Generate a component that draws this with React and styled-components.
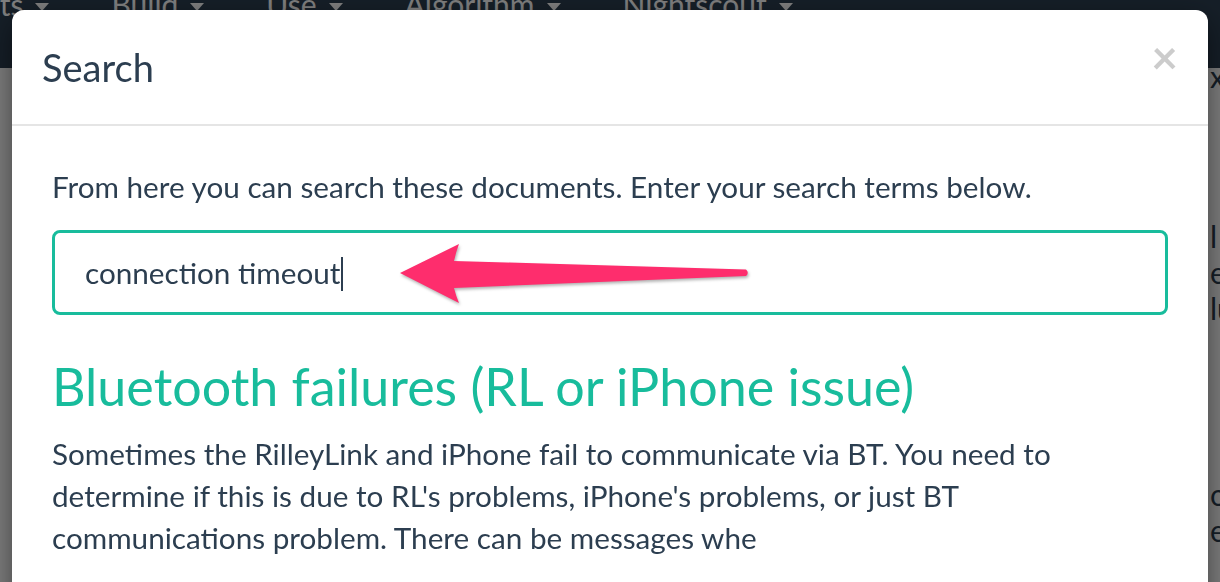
import React from "react";
import styled, { createGlobalStyle } from "styled-components";

const GlobalStyle = createGlobalStyle`
  html, body {
    margin: 0;
    padding: 0;
    overflow: hidden;
  }
  body {
    font-family: Lato, "Open Sans", sans-serif;
    color: #2c3e50;
    background: #fff;
  }
`;

const Page = styled.div`
  width: 1220px;
  height: 582px;
  overflow: hidden;
`;

const Navbar = styled.nav`
  height: 68px;
  background: #2c3e50;
  display: flex;
  align-items: flex-start;
  margin-left: -128px;
  gap: 62px;
`;

const NavItem = styled.span`
  display: flex;
  align-items: center;
  gap: 12px;
  color: #fff;
  font-size: 30px;
  line-height: 30px;
  margin-top: -11px;
  white-space: nowrap;
`;

const Caret = styled.span`
  display: inline-block;
  width: 0;
  height: 0;
  border-top: 8px solid #fff;
  border-left: 7px solid transparent;
  border-right: 7px solid transparent;
  margin-top: 6px;
`;

const Behind = styled.div`
  display: grid;
  grid-template-columns: 1210px 1fr;
`;

const BehindText = styled.div`
  font-size: 30px;
  line-height: 36px;
  color: #2c3e50;
  white-space: nowrap;
`;

const Line = styled.div`
  margin-top: ${(p) => p.$gap || 0}px;
`;

const Backdrop = styled.div`
  position: fixed;
  inset: 0;
  background: rgba(0, 0, 0, 0.5);
`;

const Dialog = styled.div`
  position: fixed;
  inset: 0;
  padding: 10px 12px 0;
`;

const Content = styled.div`
  background: #fff;
  border-radius: 12px;
  box-shadow: 0 10px 30px rgba(0, 0, 0, 0.5);
  height: 700px;
`;

const Header = styled.div`
  display: flex;
  align-items: flex-start;
  justify-content: space-between;
  padding: 30px;
  border-bottom: 2px solid #e5e5e5;
`;

const Title = styled.h4`
  margin: 0;
  font-size: 38px;
  line-height: 54px;
  font-weight: 400;
  color: #2c3e50;
`;

const Close = styled.button`
  border: 0;
  background: none;
  padding: 0;
  margin-top: -3px;
  font-family: Lato, sans-serif;
  font-size: 46px;
  font-weight: 700;
  line-height: 40px;
  color: #cccccc;
  cursor: pointer;
`;

const Body = styled.div`
  padding: 40px;
  font-size: 29.7px;
  line-height: 42px;
`;

const Intro = styled.p`
  margin: 0 0 22px;
`;

const Field = styled.div`
  position: relative;
  height: 85px;
  box-sizing: border-box;
  border: 3.5px solid #18bc9c;
  border-radius: 8px;
  padding: 0 30px;
  display: flex;
  align-items: center;
  font-size: 29.7px;
`;

const Cursor = styled.span`
  display: inline-block;
  width: 2px;
  height: 34px;
  background: #2c3e50;
  margin-left: 1px;
  transform: translateY(1px);
`;

const Arrow = styled.svg`
  position: absolute;
  left: -3.5px;
  top: -3.5px;
  overflow: visible;
  filter: drop-shadow(1px 2px 1.5px rgba(0, 0, 0, 0.3));
`;

const ResultTitle = styled.h3`
  margin: 42px 0 17px;
  font-size: 52px;
  line-height: 59px;
  font-weight: 400;
  color: #18bc9c;
`;

const ResultText = styled.p`
  margin: 0;
  width: 1020px;
`;

const navItems = ["Documents", "Build", "Use", "Algorithm", "Nightscout"];

export default function App() {
  return (
    <Page>
      <GlobalStyle />
      <Navbar>
        {navItems.map((item) => (
          <NavItem key={item}>
            {item}
            <Caret />
          </NavItem>
        ))}
      </Navbar>
      <Behind>
        <div />
        <BehindText>
          <Line $gap={-10}>xe</Line>
          <Line $gap={124}>l a</Line>
          <Line>er</Line>
          <Line>lu</Line>
          <Line $gap={150}>or</Line>
          <Line>e</Line>
        </BehindText>
      </Behind>
      <Backdrop />
      <Dialog>
        <Content>
          <Header>
            <Title>Search</Title>
            <Close aria-label="Close">×</Close>
          </Header>
          <Body>
            <Intro>
              From here you can search these documents. Enter your search terms
              below.
            </Intro>
            <Field>
              connection timeout
              <Cursor />
              <Arrow width="720" height="90" viewBox="0 0 720 90">
                <path
                  d="M348 43 L407 14 Q404 22 402 31 L694 39.5 Q697.5 42.5 694 46 L402 58 Q404 66 407 73 Z"
                  fill="#fe2d6d"
                />
              </Arrow>
            </Field>
            <ResultTitle>Bluetooth failures (RL or iPhone issue)</ResultTitle>
            <ResultText>
              Sometimes the RilleyLink and iPhone fail to communicate via BT.
              You need to determine if this is due to RL's problems, iPhone's
              problems, or just BT communications problem. There can be
              messages whe
            </ResultText>
          </Body>
        </Content>
      </Dialog>
    </Page>
  );
}
